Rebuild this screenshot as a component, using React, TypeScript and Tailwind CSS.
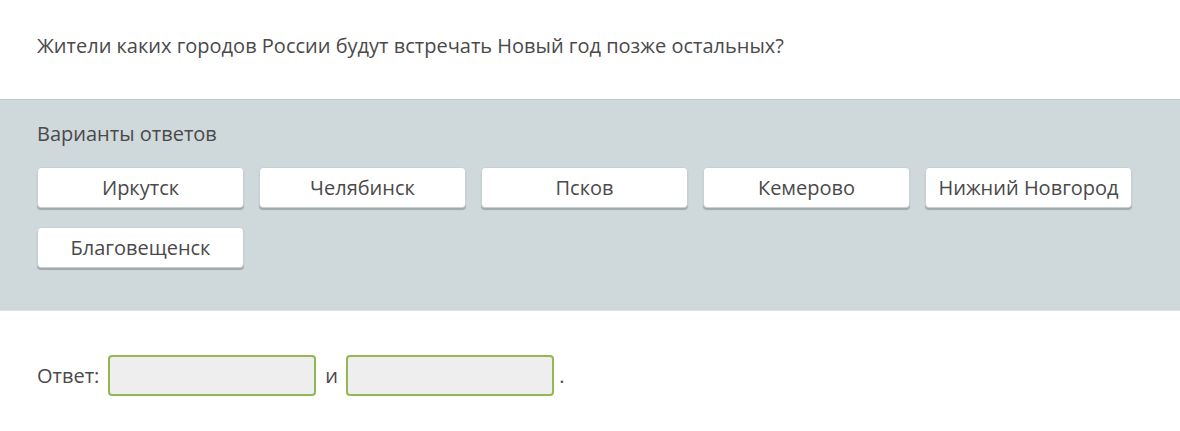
const options = [
  "Иркутск",
  "Челябинск",
  "Псков",
  "Кемерово",
  "Нижний Новгород",
  "Благовещенск",
];

export default function App() {
  return (
    <div className="w-[1180px] h-[431px] bg-white text-[#4a4a4a] text-[20px] font-['Open_Sans',sans-serif] overflow-hidden">
      <div className="h-[99px] px-[37px] pt-[32px] leading-[28px]">
        Жители каких городов России будут встречать Новый год позже остальных?
      </div>

      <section className="h-[212px] bg-[#cfd8da] border-t border-[#bfc8cb] border-b border-b-[#dde3e4] px-[37px] pt-[20px]">
        <div className="leading-[28px]">Варианты ответов</div>
        <div className="mt-[19px] flex flex-wrap gap-x-[15px] gap-y-[19px] w-[1110px]">
          {options.map((o) => (
            <button
              key={o}
              className="w-[207px] h-[41px] rounded-[4px] bg-white shadow-[0_2px_1px_rgba(0,0,0,0.22)] border border-[#c8d0d2] text-[20px] text-[#4a4a4a] leading-none"
            >
              {o}
            </button>
          ))}
        </div>
      </section>

      <div className="flex items-center pl-[37px] pt-[44px]">
        <span className="mr-[9px]">Ответ:</span>
        <div className="w-[208px] h-[41px] rounded-[4px] bg-[#eeeeee] border-2 border-[#93b752]"></div>
        <span className="mx-[9px] w-[12px] text-center">и</span>
        <div className="w-[208px] h-[41px] rounded-[4px] bg-[#eeeeee] border-2 border-[#93b752]"></div>
        <span className="ml-[5px]">.</span>
      </div>
    </div>
  );
}
